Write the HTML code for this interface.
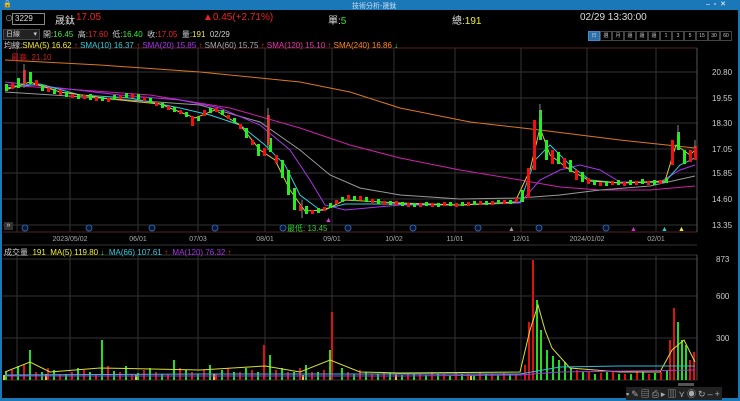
<!DOCTYPE html><html><head><meta charset="utf-8"><style>
body{margin:0;width:740px;height:401px;background:#000;overflow:hidden;font-family:"Liberation Sans","Noto Sans CJK TC",sans-serif;position:relative}
.t{position:absolute;white-space:nowrap}
.tb{display:inline-block;width:10px;height:8px;border:1px solid #444;text-align:center;line-height:8px;overflow:hidden}
</style></head><body>
<svg width="740" height="401" style="position:absolute;left:0;top:0" font-family="Liberation Sans">
<g stroke="#333" stroke-width="1">
<path d="M3 72H697M3 98H697M3 123H697M3 149H697M3 173H697M3 199H697M3 225H697M3 259H697M3 296H697M3 338H697"/>
<path d="M17 48V232M70 48V232M138 48V232M198 48V232M265 48V232M332 48V232M394 48V232M455 48V232M521 48V232M587 48V232M656 48V232"/>
<path d="M17 255V380M70 255V380M138 255V380M198 255V380M265 255V380M332 255V380M394 255V380M455 255V380M521 255V380M587 255V380M656 255V380"/>
<path d="M3 245H697M3 255H697M3 380H697"/>
</g>
<path d="M3 48H697M3 232H697" stroke="#522"/>
<path d="M697 48V232M697 255V380" stroke="#555"/>
<g fill="#ccc" font-size="8">
<text x="712" y="75">20.80</text><text x="712" y="101">19.55</text><text x="712" y="126">18.30</text><text x="712" y="152">17.05</text><text x="712" y="176">15.85</text><text x="712" y="202">14.60</text><text x="712" y="228">13.35</text>
<text x="716" y="262">873</text><text x="716" y="299">600</text><text x="716" y="341">300</text>
</g>
<g fill="#aaa" font-size="7" text-anchor="middle">
<text x="70" y="241">2023/05/02</text><text x="138" y="241">06/01</text><text x="198" y="241">07/03</text><text x="265" y="241">08/01</text><text x="332" y="241">09/01</text><text x="394" y="241">10/02</text><text x="455" y="241">11/01</text><text x="521" y="241">12/01</text><text x="587" y="241">2024/01/02</text><text x="656" y="241">02/01</text>
</g>
<g fill="#113" stroke="#26a"><circle cx="25" cy="228" r="3"/><circle cx="89" cy="228" r="3"/><circle cx="152" cy="228" r="3"/><circle cx="215" cy="228" r="3"/><circle cx="283" cy="228" r="3"/><circle cx="348" cy="228" r="3"/><circle cx="413" cy="228" r="3"/><circle cx="478" cy="228" r="3"/><circle cx="539" cy="228" r="3"/><circle cx="606" cy="228" r="3"/></g>
<g font-size="7"><text x="508" y="231" fill="#999">▲</text><text x="630" y="231" fill="#c3c">▲</text><text x="661" y="231" fill="#3cc">▲</text><text x="678" y="231" fill="#ee3">▲</text><text x="325" y="222" fill="#e3e">▲</text></g>
<g fill="none" stroke-width="1">
<polyline stroke="#d72" points="5,60 100,65 200,72 300,82 350,92 400,108 470,122 540,130 620,140 695,148"/>
<polyline stroke="#c2a" points="5,85 80,90 150,95 230,108 300,128 350,145 400,158 460,170 520,180 560,187 600,190 650,190 695,186"/>
<polyline stroke="#999" points="5,92 100,98 200,105 260,122 300,150 330,175 360,188 400,195 460,199 520,198 560,195 600,190 650,186 695,176"/>
<polyline stroke="#a3e" points="5,82 60,88 120,95 180,100 220,108 260,125 290,150 310,180 325,205 345,210 400,205 460,205 520,203 540,180 560,170 580,165 600,170 620,182 660,182 680,170 695,165"/>
<polyline stroke="#3cd" points="5,88 40,84 80,95 130,98 180,108 210,115 240,125 265,145 285,165 300,195 320,210 345,204 400,204 460,205 520,202 535,160 550,145 570,165 590,180 620,183 665,182 680,165 695,158"/>
<polyline stroke="#dc3" points="5,90 30,82 60,92 110,99 160,104 195,118 215,110 240,125 260,150 275,160 290,190 305,211 325,210 345,200 400,203 460,205 515,202 530,170 540,128 550,155 570,170 590,181 620,183 665,181 676,145 690,155 695,150"/>
</g>
<path fill="#2e2" d="M5,84h3v7h-3zM17,78h3v10h-3zM29,72h3v12h-3zM41,85h3v6h-3zM53,89h3v5h-3zM65,92h3v5h-3zM77,95h3v4h-3zM89,94h3v6h-3zM101,97h3v4h-3zM113,95h3v5h-3zM125,93h3v5h-3zM137,94h3v5h-3zM149,98h3v5h-3zM161,103h3v5h-3zM173,107h3v5h-3zM185,112h3v5h-3zM197,117h3v4h-3zM209,108h3v5h-3zM221,110h3v5h-3zM233,118h3v5h-3zM245,128h3v10h-3zM257,144h3v12h-3zM269,138h3v14h-3zM281,160h3v18h-3zM287,170h3v25h-3zM293,188h3v22h-3zM305,206h3v8h-3zM317,208h3v5h-3zM329,203h3v5h-3zM341,197h3v5h-3zM353,196h3v5h-3zM365,197h3v5h-3zM377,199h3v5h-3zM389,201h3v4h-3zM401,202h3v4h-3zM413,203h3v4h-3zM425,202h3v4h-3zM437,203h3v4h-3zM449,202h3v4h-3zM461,202h3v4h-3zM473,201h3v4h-3zM485,201h3v4h-3zM497,200h3v4h-3zM509,200h3v4h-3zM521,190h3v12h-3zM539,110h3v30h-3zM545,140h3v20h-3zM557,152h3v12h-3zM569,160h3v12h-3zM581,172h3v10h-3zM593,180h3v5h-3zM605,181h3v5h-3zM617,180h3v5h-3zM629,180h3v5h-3zM641,179h3v5h-3zM653,180h3v5h-3zM665,178h3v5h-3zM677,132h3v18h-3zM683,150h3v14h-3z"/>
<path fill="#e11" d="M11,83h3v6h-3zM23,70h3v14h-3zM35,80h3v6h-3zM47,88h3v4h-3zM59,90h3v5h-3zM71,94h3v4h-3zM83,95h3v4h-3zM95,97h3v4h-3zM107,98h3v4h-3zM119,95h3v4h-3zM131,94h3v4h-3zM143,97h3v4h-3zM155,102h3v4h-3zM167,106h3v4h-3zM179,110h3v4h-3zM191,116h3v10h-3zM203,110h3v6h-3zM215,108h3v4h-3zM227,115h3v4h-3zM239,124h3v5h-3zM251,140h3v5h-3zM263,148h3v8h-3zM267,115h3v30h-3zM275,155h3v8h-3zM299,205h3v6h-3zM311,210h3v4h-3zM323,207h3v4h-3zM335,200h3v4h-3zM347,195h3v4h-3zM359,196h3v4h-3zM371,199h3v4h-3zM383,201h3v4h-3zM395,201h3v4h-3zM407,203h3v4h-3zM419,203h3v4h-3zM431,203h3v4h-3zM443,202h3v4h-3zM455,203h3v4h-3zM467,202h3v4h-3zM479,201h3v4h-3zM491,201h3v4h-3zM503,200h3v4h-3zM515,198h3v4h-3zM527,168h3v30h-3zM533,120h3v50h-3zM551,150h3v14h-3zM563,158h3v10h-3zM575,170h3v10h-3zM587,178h3v6h-3zM599,182h3v4h-3zM611,181h3v4h-3zM623,182h3v4h-3zM635,181h3v4h-3zM647,181h3v4h-3zM659,180h3v4h-3zM671,140h3v25h-3zM689,150h3v12h-3zM694,146h3v14h-3z"/>
<path stroke="#888" d="M24,64V88M268,108V150M540,104V118M678,125V135M695,140V148M302,200V218"/>
<path fill="#2d2" d="M5,372h2v8h-2zM17,366h2v14h-2zM29,350h2v30h-2zM41,372h2v8h-2zM53,370h2v10h-2zM65,374h2v6h-2zM77,368h2v12h-2zM89,372h2v8h-2zM101,340h2v40h-2zM113,371h2v9h-2zM125,366h2v14h-2zM137,373h2v7h-2zM149,368h2v12h-2zM161,374h2v6h-2zM173,360h2v20h-2zM185,370h2v10h-2zM197,374h2v6h-2zM209,365h2v15h-2zM221,370h2v10h-2zM233,372h2v8h-2zM245,368h2v12h-2zM257,372h2v8h-2zM269,355h2v25h-2zM281,368h2v12h-2zM293,372h2v8h-2zM305,365h2v15h-2zM317,372h2v8h-2zM329,350h2v30h-2zM341,368h2v12h-2zM353,374h2v6h-2zM365,372h2v8h-2zM377,374h2v6h-2zM389,373h2v7h-2zM401,375h2v5h-2zM413,374h2v6h-2zM425,375h2v5h-2zM437,374h2v6h-2zM449,375h2v5h-2zM461,374h2v6h-2zM473,375h2v5h-2zM485,374h2v6h-2zM497,375h2v5h-2zM509,374h2v6h-2zM536,300h2v80h-2zM540,330h2v50h-2zM546,350h2v30h-2zM552,356h2v24h-2zM558,360h2v20h-2zM564,362h2v18h-2zM570,368h2v12h-2zM582,372h2v8h-2zM594,374h2v6h-2zM606,372h2v8h-2zM618,374h2v6h-2zM630,374h2v6h-2zM642,372h2v8h-2zM654,373h2v7h-2zM666,370h2v10h-2zM677,322h2v58h-2zM681,340h2v40h-2zM685,345h2v35h-2z"/>
<path fill="#d11" d="M11,370h2v10h-2zM23,364h2v16h-2zM35,372h2v8h-2zM47,368h2v12h-2zM59,374h2v6h-2zM71,372h2v8h-2zM83,370h2v10h-2zM95,374h2v6h-2zM107,366h2v14h-2zM119,372h2v8h-2zM131,374h2v6h-2zM143,370h2v10h-2zM155,372h2v8h-2zM167,374h2v6h-2zM179,368h2v12h-2zM191,372h2v8h-2zM203,370h2v10h-2zM215,374h2v6h-2zM227,368h2v12h-2zM239,372h2v8h-2zM251,370h2v10h-2zM263,345h2v35h-2zM275,370h2v10h-2zM287,372h2v8h-2zM299,368h2v12h-2zM311,372h2v8h-2zM323,370h2v10h-2zM331,312h2v68h-2zM347,372h2v8h-2zM359,370h2v10h-2zM371,374h2v6h-2zM383,372h2v8h-2zM395,374h2v6h-2zM407,373h2v7h-2zM419,374h2v6h-2zM431,372h2v8h-2zM443,374h2v6h-2zM455,373h2v7h-2zM467,374h2v6h-2zM479,372h2v8h-2zM491,374h2v6h-2zM503,373h2v7h-2zM515,374h2v6h-2zM524,365h2v15h-2zM528,322h2v58h-2zM532,260h2v120h-2zM576,370h2v10h-2zM588,372h2v8h-2zM600,373h2v7h-2zM612,372h2v8h-2zM624,374h2v6h-2zM636,372h2v8h-2zM648,374h2v6h-2zM660,372h2v8h-2zM669,340h2v40h-2zM673,308h2v72h-2zM689,360h2v20h-2zM693,352h2v28h-2z"/>
<path fill="#ec2" d="M3,375h2v5h-2zM45,374h2v6h-2zM135,375h2v5h-2zM213,374h2v6h-2zM302,375h2v5h-2zM395,375h2v5h-2zM470,375h2v5h-2z"/>
<g fill="none">
<polyline stroke="#dd3" points="5,372 30,362 50,372 100,368 200,370 265,366 300,372 330,360 360,372 400,373 520,372 530,330 538,305 545,330 552,348 570,368 620,372 660,372 672,350 684,340 695,362"/>
<polyline stroke="#3bd" points="5,375 200,374 400,374 520,374 560,367 620,366 695,366"/>
<polyline stroke="#a3e" points="5,376 200,376 400,376 520,375 560,372 695,370"/>
</g>
<rect x="678" y="383" width="16" height="3" fill="#555"/>
</svg>
<div style="position:absolute;left:0;top:0;width:740px;height:10px;background:#1b78b8"></div>
<div class="t" style="left:352px;top:1px;font-size:7px;color:#cde">技術分析-晟鈦</div>
<div class="t" style="left:3px;top:0px;font-size:7px;color:#fff">🔒</div>
<div class="t" style="left:706px;top:0px;font-size:7px;color:#fff">–&nbsp; ▫&nbsp; ✕</div>
<div style="position:absolute;left:0;top:10px;width:2px;height:391px;background:#1b78b8"></div>
<div style="position:absolute;right:0;top:10px;width:2px;height:391px;background:#1b78b8"></div>
<div style="position:absolute;left:0;top:398px;width:740px;height:3px;background:#1b78b8"></div>
<div class="t" style="left:5px;top:13px;font-size:8px;color:#aaa">⊙</div>
<div style="position:absolute;left:12px;top:13px;width:29px;height:10px;border:1px solid #888;font-size:8px;color:#ddd;line-height:10px;padding-left:2px">3229</div>
<div class="t" style="left:55px;top:12px;font-size:10px;color:#ddd">晟鈦</div>
<div class="t" style="left:76px;top:12px;font-size:10px;color:#e22">17.05</div>
<div class="t" style="left:203px;top:12px;font-size:10px;color:#e22">▲0.45(+2.71%)</div>
<div class="t" style="left:328px;top:12px;font-size:10px;color:#ddd">單:<span style="color:#3d3">5</span></div>
<div class="t" style="left:452px;top:12px;font-size:10px;color:#ddd">總:<span style="color:#ee3">191</span></div>
<div class="t" style="left:580px;top:12px;font-size:10px;color:#ddd">02/29 13:30:00</div>
<div style="position:absolute;left:3px;top:29px;width:33px;height:9px;background:#222;border:1px solid #444;font-size:7px;color:#ccc;line-height:9px;padding-left:2px">日線 <span style="float:right;margin-right:2px">▾</span></div>
<div class="t" style="left:43px;top:29px;font-size:8px;color:#ccc">開:<span style="color:#3e3">16.45</span>&nbsp; 高:<span style="color:#e22">17.60</span>&nbsp; 低:<span style="color:#3e3">16.40</span>&nbsp; 收:<span style="color:#e22">17.05</span>&nbsp; 量:<span style="color:#ee3">191</span>&nbsp; 02/29</div>
<div class="t" style="left:588px;top:31px;font-size:5px;color:#ccc;line-height:8px"><span class="tb" style="background:#2a6fa8;border-color:#48c">日</span><span class="tb">週</span><span class="tb">月</span><span class="tb">還</span><span class="tb">還</span><span class="tb">還</span><span class="tb">1</span><span class="tb">3</span><span class="tb">5</span><span class="tb">15</span><span class="tb">30</span><span class="tb">60</span></div>
<div class="t" style="left:4px;top:40px;font-size:8px;color:#ccc">均線:<span style="color:#ee3">SMA(5) 16.62</span> <span style="color:#e22">↑</span> <span style="color:#3cd">SMA(10) 16.37</span> <span style="color:#e22">↑</span> <span style="color:#a3e">SMA(20) 15.85</span> <span style="color:#e22">↑</span> <span style="color:#aaa">SMA(60) 15.75</span> <span style="color:#e22">↑</span> <span style="color:#e3a">SMA(120) 15.10</span> <span style="color:#e22">↑</span> <span style="color:#f82">SMA(240) 16.86</span> <span style="color:#3e3">↓</span></div>
<div class="t" style="left:11px;top:52px;font-size:8px;color:#c22">最高: 21.10</div>
<div class="t" style="left:287px;top:223px;font-size:8px;color:#3c3">最低: 13.45</div>
<div class="t" style="left:4px;top:247px;font-size:8px;color:#ccc">成交量&nbsp; <span style="color:#ee3">191&nbsp; MA(5) 119.80</span> <span style="color:#3e3">↓</span>&nbsp; <span style="color:#3cd">MA(66) 107.61</span> <span style="color:#e22">↑</span>&nbsp; <span style="color:#a3e">MA(120) 76.32</span> <span style="color:#e22">↑</span></div>
<div style="position:absolute;left:4px;top:222px;width:9px;height:8px;background:#333;color:#ddd;font-size:7px;line-height:8px;text-align:center">»</div>
<div class="t" style="left:626px;top:387px;font-size:9px;color:#aaa;background:#222;letter-spacing:2px">▪✎▤⎙▸▥⋎◉↻–+</div>
</body></html>
